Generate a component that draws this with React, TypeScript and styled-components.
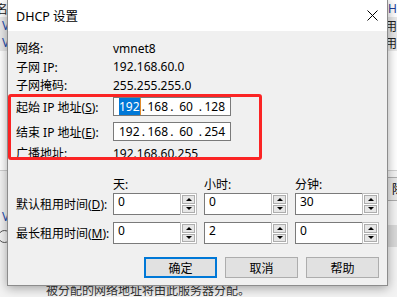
import React from 'react'
import styled, { createGlobalStyle } from 'styled-components'

const GlobalStyle = createGlobalStyle`
    html, body {
        margin: 0;
        padding: 0;
    }
    body {
        width: 397px;
        height: 297px;
        overflow: hidden;
        font-family: "Noto Sans", "Noto Sans CJK SC", sans-serif;
        font-size: 12px;
        color: #000;
    }
`

// Screen and the window behind the dialog
const Screen = styled.div`
    position: relative;
    width: 397px;
    height: 297px;
    overflow: hidden;
    background: #f3f3f3;
`

const Backdrop = styled.div`
    display: flex;
    flex-direction: column;
    height: 100%;
`

const BackRow = styled.div<{ $h: number; $bg?: string; $line?: boolean }>`
    height: ${(p) => p.$h}px;
    flex-shrink: 0;
    box-sizing: border-box;
    background: ${(p) => p.$bg ?? 'transparent'};
    border-top: ${(p) => (p.$line ? '1px solid #cfcfcf' : 'none')};
    display: flex;
    align-items: center;
    justify-content: space-between;
    padding: 0 0 0 2px;
`

const BackText = styled.span<{ $color?: string }>`
    font-size: 12px;
    color: ${(p) => p.$color ?? '#222'};
    white-space: nowrap;
`

const BackCircle = styled.span`
    width: 11px;
    height: 11px;
    margin-left: -4px;
    border: 1px solid #555;
    border-radius: 50%;
`

const BackBox = styled.span`
    height: 22px;
    padding: 0 4px;
    margin-right: -12px;
    border: 1px solid #adadad;
    background: #e8e8e8;
    display: flex;
    align-items: center;
`

const BackBand = styled.span`
    width: 10px;
    height: 22px;
    background: #d9d9d9;
`

const BottomText = styled.div`
    padding: 0 0 0 46px;
    color: #333;
    font-size: 12px;
    line-height: 14px;
    white-space: nowrap;
`

// Dialog
const Dialog = styled.div`
    position: absolute;
    left: 7px;
    top: -1px;
    width: 381px;
    height: 287px;
    box-sizing: border-box;
    border: 1px solid #8c8c8c;
    background: #f0f0f0;
    box-shadow: 0 2px 10px rgba(0, 0, 0, 0.35);
    display: flex;
    flex-direction: column;
`

const TitleBar = styled.div`
    height: 31px;
    flex-shrink: 0;
    background: #fff;
    display: flex;
    align-items: center;
    justify-content: space-between;
    padding: 0 9px 0 8px;
    box-sizing: border-box;
`

const Title = styled.span`
    font-size: 12.5px;
`

const Body = styled.div`
    display: flex;
    flex-direction: column;
    padding: 8px 8px 0 8px;
`

const InfoRow = styled.div<{ $h?: number; $mt?: number }>`
    display: flex;
    align-items: center;
    height: ${(p) => p.$h ?? 18.5}px;
    margin-top: ${(p) => p.$mt ?? 0}px;
`

const Label = styled.span<{ $w?: number }>`
    width: ${(p) => p.$w ?? 97}px;
    flex-shrink: 0;
    white-space: nowrap;
`

const Value = styled.span``

const IpBox = styled.div`
    width: 118px;
    height: 19px;
    box-sizing: border-box;
    border: 1px solid #7a7a7a;
    background: #fff;
    display: flex;
    align-items: center;
    padding-left: 5px;
`

const Octet = styled.span`
    width: 20px;
    text-align: center;
    line-height: 15px;
`

const Selected = styled.span`
    background: #0078d7;
    color: #fff;
    border-right: 1px solid #e08a2a;
`

const Dot = styled.span`
    width: 8.5px;
    text-align: center;
`

const LeaseGrid = styled.div<{ $mt: number; $h: number }>`
    display: grid;
    grid-template-columns: 90px 84px 84px 84px;
    column-gap: 7px;
    align-items: center;
    height: ${(p) => p.$h}px;
    margin-top: ${(p) => p.$mt}px;
`

const ColHead = styled.span``

const Spin = styled.div`
    display: flex;
    height: 22px;
`

const SpinField = styled.div`
    flex: 1;
    box-sizing: border-box;
    border: 1px solid #7a7a7a;
    border-right: none;
    background: #fff;
    padding: 1px 4px;
    line-height: 14px;
`

const SpinButtons = styled.div`
    width: 17px;
    box-sizing: border-box;
    border: 1px solid #bdbdbd;
    background: #fff;
    padding: 1px;
    display: flex;
    flex-direction: column;
    gap: 1px;
`

const SpinButton = styled.div`
    flex: 1;
    border: 1px solid #adadad;
    background: #e6e6e6;
    display: flex;
    align-items: center;
    justify-content: center;
`

const Arrow = styled.span<{ $up?: boolean }>`
    width: 0;
    height: 0;
    border-left: 3px solid transparent;
    border-right: 3px solid transparent;
    ${(p) => (p.$up ? 'border-bottom: 3px solid #000;' : 'border-top: 3px solid #000;')}
`

const ButtonRow = styled.div`
    display: flex;
    justify-content: flex-end;
    gap: 8px;
    margin-top: 13px;
`

const ActionButton = styled.button<{ $default?: boolean }>`
    width: 73px;
    height: 21px;
    box-sizing: border-box;
    padding: 0;
    border: ${(p) => (p.$default ? '2px solid #0078d7' : '1px solid #adadad')};
    background: #e1e1e1;
    font: inherit;
    color: #000;
`

// Red highlight drawn on top of the screenshot
const Highlight = styled.div`
    position: absolute;
    left: 8px;
    top: 94px;
    width: 254px;
    height: 66px;
    box-sizing: border-box;
    border: 3px solid #fb2424;
    border-radius: 3px;
`

const Spinner = ({ value }: { value: string }) => (
    <Spin>
        <SpinField>{value}</SpinField>
        <SpinButtons>
            <SpinButton>
                <Arrow $up />
            </SpinButton>
            <SpinButton>
                <Arrow />
            </SpinButton>
        </SpinButtons>
    </Spin>
)

const IpField = ({ parts, select }: { parts: string[]; select?: boolean }) => (
    <IpBox>
        {parts.map((p, i) => (
            <React.Fragment key={i}>
                {i > 0 && <Dot>.</Dot>}
                <Octet>{select && i === 0 ? <Selected>{p}</Selected> : p}</Octet>
            </React.Fragment>
        ))}
    </IpBox>
)

const CloseIcon = () => (
    <svg width="11" height="11" viewBox="0 0 11 11">
        <path d="M0.5 0.5 L10.5 10.5 M10.5 0.5 L0.5 10.5" stroke="#000" strokeWidth="1" />
    </svg>
)

const App: React.FC = (): JSX.Element => {
    return (
        <Screen>
            <GlobalStyle />
            <Backdrop>
                <BackRow $h={17} $bg="#fff">
                    <BackText style={{ marginLeft: -6 }}>名</BackText>
                    <BackText $color="#1f3d99">H</BackText>
                </BackRow>
                <BackRow $h={17} $bg="#e9e9e9">
                    <BackText $color="#1f4fb0">V</BackText>
                    <BackText>已用</BackText>
                </BackRow>
                <BackRow $h={17} $bg="#e9e9e9">
                    <BackText $color="#1f4fb0">V</BackText>
                    <BackText>已用</BackText>
                </BackRow>
                <BackRow $h={119} $bg="#fff" />
                <BackRow $h={36} $line>
                    <span />
                    <BackBox>除</BackBox>
                </BackRow>
                <BackRow $h={20}>
                    <BackText $color="#1f4fb0">V</BackText>
                </BackRow>
                <BackRow $h={20}>
                    <BackCircle />
                    <BackBand />
                </BackRow>
                <BackRow $h={38} />
                <BottomText>被分配的网络地址将由此服务器分配。</BottomText>
            </Backdrop>

            <Dialog>
                <TitleBar>
                    <Title>DHCP 设置</Title>
                    <CloseIcon />
                </TitleBar>
                <Body>
                    <InfoRow>
                        <Label>网络:</Label>
                        <Value>vmnet8</Value>
                    </InfoRow>
                    <InfoRow>
                        <Label>子网 IP:</Label>
                        <Value>192.168.60.0</Value>
                    </InfoRow>
                    <InfoRow>
                        <Label>子网掩码:</Label>
                        <Value>255.255.255.0</Value>
                    </InfoRow>
                    <InfoRow $h={19} $mt={2.5}>
                        <Label>
                            起始 IP 地址(<u>S</u>):
                        </Label>
                        <IpField parts={['192', '168', '60', '128']} select />
                    </InfoRow>
                    <InfoRow $h={19} $mt={6}>
                        <Label>
                            结束 IP 地址(<u>E</u>):
                        </Label>
                        <IpField parts={['192', '168', '60', '254']} />
                    </InfoRow>
                    <InfoRow $h={18} $mt={3}>
                        <Label>广播地址:</Label>
                        <Value>192.168.60.255</Value>
                    </InfoRow>

                    <LeaseGrid $h={16} $mt={13}>
                        <span />
                        <ColHead>天:</ColHead>
                        <ColHead>小时:</ColHead>
                        <ColHead>分钟:</ColHead>
                    </LeaseGrid>
                    <LeaseGrid $h={22} $mt={2}>
                        <Label $w={90}>
                            默认租用时间(<u>D</u>):
                        </Label>
                        <Spinner value="0" />
                        <Spinner value="0" />
                        <Spinner value="30" />
                    </LeaseGrid>
                    <LeaseGrid $h={22} $mt={7}>
                        <Label $w={90}>
                            最长租用时间(<u>M</u>):
                        </Label>
                        <Spinner value="0" />
                        <Spinner value="2" />
                        <Spinner value="0" />
                    </LeaseGrid>

                    <ButtonRow>
                        <ActionButton $default>确定</ActionButton>
                        <ActionButton>取消</ActionButton>
                        <ActionButton>帮助</ActionButton>
                    </ButtonRow>
                </Body>
            </Dialog>

            <Highlight />
        </Screen>
    )
}

export default App
